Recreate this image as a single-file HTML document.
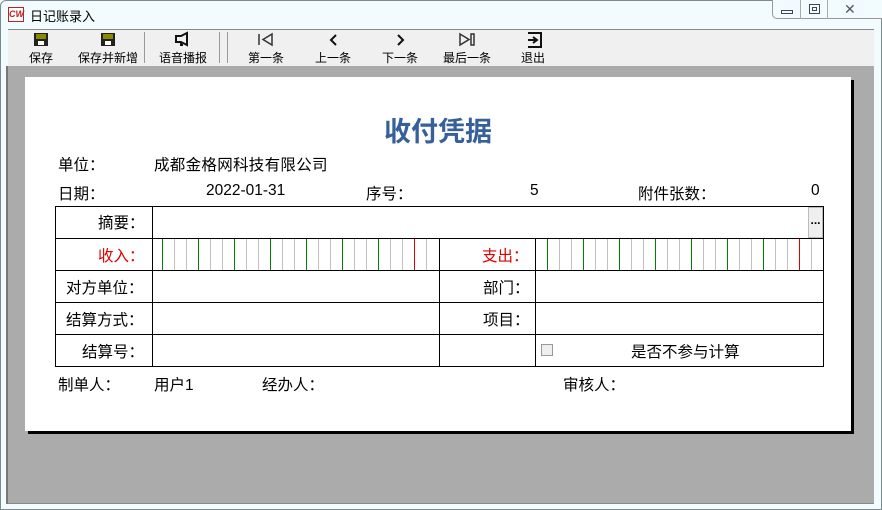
<!DOCTYPE html>
<html><head><meta charset="utf-8"><style>
*{margin:0;padding:0;box-sizing:border-box}
body{width:882px;height:510px;overflow:hidden;background:#f2fbfd;font-family:"Liberation Sans","Noto Sans CJK SC",sans-serif;font-size:15.5px;color:#000;position:relative}
.a{position:absolute;white-space:nowrap}
.tb{font-size:12px;text-align:center;width:70px}
.v{position:absolute;top:239px;width:1px;height:31px;background:#c0c0c0}
.g{background:#008000}.r{background:#e00000}
</style></head><body>
<div class="a" style="left:0;top:0;width:882px;height:510px;border:1px solid #7a8a90;border-radius:6px 6px 0 0"></div>
<div class="a" style="left:8px;top:7px;width:16px;height:15px;border:1px solid #b22;background:#fff;color:#b22;font:bold italic 9px 'Liberation Sans';line-height:13px;text-align:center">CW</div>
<div class="a" style="left:30px;top:6px;font-size:13px">日记账录入</div>
<div class="a" style="left:772px;top:0;width:123px;height:19px;border:1px solid #999;border-top:none;border-radius:0 0 5px 5px;background:#f2fbfd"></div>
<div class="a" style="left:800px;top:0;width:1px;height:19px;background:#aaa"></div>
<div class="a" style="left:827px;top:0;width:1px;height:19px;background:#aaa"></div>
<div class="a" style="left:781px;top:10px;width:12px;height:4px;border:1px solid #445"></div>
<div class="a" style="left:809px;top:4px;width:11px;height:10px;border:1px solid #445"><div style="margin:2px;height:4px;border:1px solid #445"></div></div>
<div class="a" style="left:844px;top:1px;font-size:14px;color:#556">✕</div>
<div class="a" style="left:8px;top:29px;width:866px;height:1px;background:#888"></div>
<div class="a" style="left:8px;top:30px;width:866px;height:36px;background:#f0f0f0"></div>
<div class="a" style="left:144px;top:32px;width:1px;height:31px;background:#999"></div>
<div class="a" style="left:219px;top:32px;width:1px;height:31px;background:#999"></div>
<div class="a" style="left:227px;top:32px;width:1px;height:31px;background:#999"></div>
<svg class="a" style="left:0;top:30px" width="882" height="20">
<g fill="#222"><rect x="34" y="3" width="14" height="13"/><rect x="101" y="3" width="14" height="13"/></g>
<g fill="#8a8a00"><rect x="36" y="4" width="10" height="5"/><rect x="103" y="4" width="10" height="5"/></g>
<g fill="#fff"><rect x="38" y="11" width="6" height="4"/><rect x="105" y="11" width="6" height="4"/></g>
<path d="M176 6h5l6-3v12l-6-3h-5z M181 12v3h2" fill="none" stroke="#111" stroke-width="2"/>
<path d="M259 4v11 M272 4l-9 5.5 9 5.5z" fill="none" stroke="#333" stroke-width="1.5"/>
<path d="M336 5l-5 5 5 5" fill="none" stroke="#111" stroke-width="2"/>
<path d="M398 5l5 5-5 5" fill="none" stroke="#111" stroke-width="2"/>
<path d="M460 4l9 5.5-9 5.5z M471 4v11h3V4z" fill="none" stroke="#333" stroke-width="1.5"/>
<path d="M528 3h13v14h-13 M528 10h8 M533 7l4 3-4 3" fill="none" stroke="#111" stroke-width="2"/>
</svg>
<div class="a tb" style="left:6px;top:49px">保存</div>
<div class="a tb" style="left:73px;top:49px">保存并新增</div>
<div class="a tb" style="left:148px;top:49px">语音播报</div>
<div class="a tb" style="left:231px;top:49px">第一条</div>
<div class="a tb" style="left:298px;top:49px">上一条</div>
<div class="a tb" style="left:365px;top:49px">下一条</div>
<div class="a tb" style="left:432px;top:49px">最后一条</div>
<div class="a tb" style="left:498px;top:49px">退出</div>
<div class="a" style="left:6px;top:66px;width:2px;height:438px;background:#777"></div>
<div class="a" style="left:8px;top:66px;width:866px;height:437px;background:#ababab"></div>
<div class="a" style="left:8px;top:503px;width:866px;height:1px;background:#888"></div>
<div class="a" style="left:28px;top:80px;width:826px;height:354px;background:#000"></div>
<div class="a" style="left:25px;top:77px;width:826px;height:354px;background:#fff"></div>
<div class="a" style="left:384px;top:110px;font-size:27px;font-weight:bold;color:#35609a">收付凭据</div>
<div class="a" style="left:58px;top:153px">单位：</div>
<div class="a" style="left:154px;top:153px;letter-spacing:0.3px">成都金格网科技有限公司</div>
<div class="a" style="left:58px;top:182px">日期：</div>
<div class="a" style="left:206px;top:182px">2022-01-31</div>
<div class="a" style="left:366px;top:182px">序号：</div>
<div class="a" style="left:530px;top:182px">5</div>
<div class="a" style="left:638px;top:182px">附件张数：</div>
<div class="a" style="left:811px;top:182px">0</div>
<svg class="a" style="left:0;top:0" width="882" height="510" shape-rendering="crispEdges">
<path stroke="#c0c0c0" stroke-width="1" d="M174.5 239v31M186.5 239v31M210.5 239v31M222.5 239v31M246.5 239v31M258.5 239v31M282.5 239v31M294.5 239v31M318.5 239v31M330.5 239v31M354.5 239v31M366.5 239v31M390.5 239v31M402.5 239v31M426.5 239v31"/>
<path stroke="#008000" stroke-width="1" d="M162.5 239v31M198.5 239v31M234.5 239v31M270.5 239v31M306.5 239v31M342.5 239v31M378.5 239v31"/>
<path stroke="#e00000" stroke-width="1" d="M414.5 239v31"/>
<rect x="55.5" y="206.5" width="768" height="160" fill="none" stroke="#000"/>
<path stroke="#000" d="M55 238.5h769M55 270.5h769M55 302.5h769M55 334.5h769M152.5 206v160M439.5 238v128M535.5 238v128"/>
<rect x="808.5" y="207.5" width="14" height="30" fill="#efefef" stroke="#bbb"/>
<text x="815.5" y="224" font-size="12" font-weight="bold" text-anchor="middle" font-family="Liberation Sans">...</text>
<rect x="541.5" y="344.5" width="11" height="11" fill="#eee" stroke="#999"/>
</svg>
<div class="v g" style="left:547px"></div><div class="v" style="left:559px"></div><div class="v" style="left:571px"></div>
<div class="v g" style="left:583px"></div><div class="v" style="left:595px"></div><div class="v" style="left:607px"></div>
<div class="v g" style="left:619px"></div><div class="v" style="left:631px"></div><div class="v" style="left:643px"></div>
<div class="v g" style="left:655px"></div><div class="v" style="left:667px"></div><div class="v" style="left:679px"></div>
<div class="v g" style="left:691px"></div><div class="v" style="left:703px"></div><div class="v" style="left:715px"></div>
<div class="v g" style="left:727px"></div><div class="v" style="left:739px"></div><div class="v" style="left:751px"></div>
<div class="v g" style="left:763px"></div><div class="v" style="left:775px"></div><div class="v" style="left:787px"></div>
<div class="v r" style="left:799px"></div><div class="v" style="left:811px"></div>
<div class="a" style="left:98px;top:211px">摘要：</div>
<div class="a" style="left:98px;top:244px;color:#e00000">收入：</div>
<div class="a" style="left:482px;top:244px;color:#e00000">支出：</div>
<div class="a" style="left:66px;top:276px">对方单位：</div>
<div class="a" style="left:483px;top:276px">部门：</div>
<div class="a" style="left:66px;top:308px">结算方式：</div>
<div class="a" style="left:483px;top:308px">项目：</div>
<div class="a" style="left:82px;top:340px">结算号：</div>
<div class="a" style="left:631px;top:340px">是否不参与计算</div>
<div class="a" style="left:58px;top:373px">制单人：</div>
<div class="a" style="left:154px;top:373px">用户1</div>
<div class="a" style="left:262px;top:373px">经办人：</div>
<div class="a" style="left:563px;top:373px">审核人：</div>
</body></html>
